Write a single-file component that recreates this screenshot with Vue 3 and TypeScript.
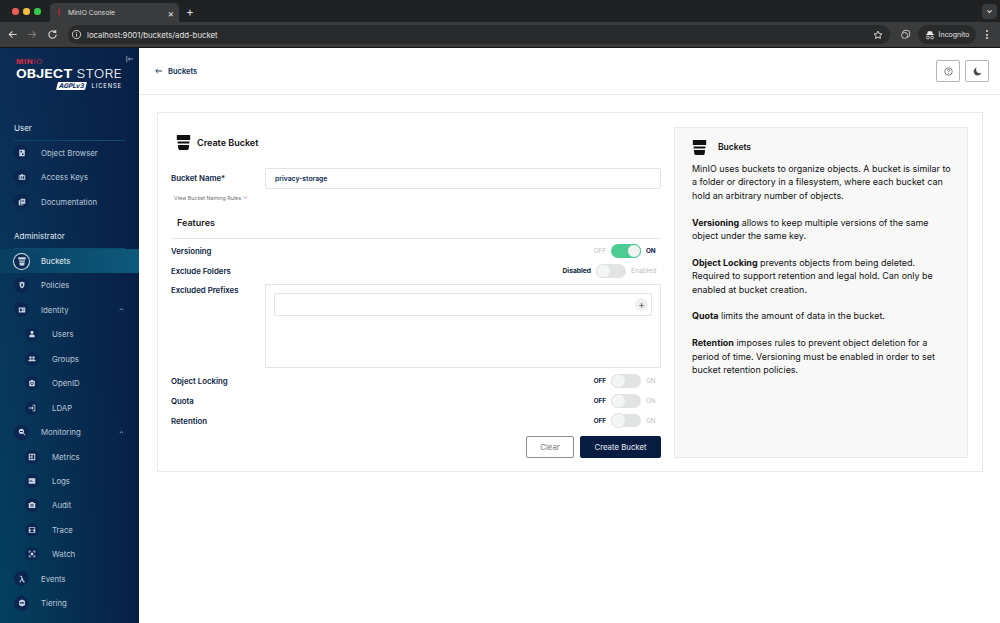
<script setup lang="ts">
type NavItem = { label: string; icon: string; sub?: boolean; active?: boolean; chevron?: boolean };
type NavGroup = { title: string; items: NavItem[] };

const icons: Record<string, string> = {
  browser: 'M2.500 1.500h11v13h-11z M5 4v3h3V4z M8 9v3h3V9z',
  keys: 'M1.500 4.500h3.500l1-2h4l1 2h3.500v9h-13z M6.500 6.500v5h1.500v-5z M9.500 6.500v5h3v-5z M3 6.500v5h1.500v-5z',
  docs: 'M5 1.500h9.500v10H5z M1.500 4.500H4v8.500h7v1.500H1.500z M7 4v1.200h5.500V4z M7 6.800V8h5.500V6.800z',
  bucket: 'M2 2h12v3.500H2z M3 7h10l-.4 2H3.400z M3.800 10.500h8.400L11.500 15h-7z',
  policies: 'M8 1c2 1.300 3.500 1.600 4.800 1.600v5.400c0 3.200-2 5.300-4.800 7C5.200 13.300 3.200 11.200 3.200 8V2.600C4.500 2.600 6 2.300 8 1z M8 4.500a1.500 3 0 1 0 0 7 1.500 3 0 0 0 0-7z',
  identity: 'M1.500 3h13v10h-13z M3.500 5.500v5h4v-5z M9 5.500v1.200h4V5.500z M9 8v1.200h4V8z',
  user: 'M8 1.500a3.200 3.200 0 1 1 0 6.400 3.200 3.200 0 0 1 0-6.400z M2.500 14.500v-2.500c0-2 2.300-3 5.500-3s5.500 1 5.500 3v2.500z',
  group: 'M5 2.500a2.400 2.400 0 1 1 0 4.800A2.400 2.400 0 0 1 5 2.500z M11 2.500a2.400 2.400 0 1 1 0 4.800A2.400 2.400 0 0 1 11 2.500z M.500 12.500c0-2.700 2.200-4.200 4.500-4.200 1 0 2.100.3 3 1 .9-.7 2-1 3-1 2.300 0 4.500 1.500 4.500 4.200z',
  openid: 'M8 1.500a2.200 2.200 0 0 1 2.200 2.200H13.500v10.800h-11V3.700h3.300A2.200 2.200 0 0 1 8 1.500z M8 5.500a3.200 3.200 0 1 0 0 6.400 3.200 3.200 0 0 0 0-6.400z M8 7a1.700 1.700 0 1 1 0 3.400A1.700 1.700 0 0 1 8 7z',
  ldap: 'M9 1.500h5.500v13H9v-1.500h4v-10H9z M1.500 7H8V4.500L11.500 8 8 11.500V9H1.500z',
  monitoring: 'M6.800 1.500a5.300 5.300 0 0 1 4.300 8.400l3.800 3.800-1.300 1.300-3.800-3.800A5.300 5.300 0 1 1 6.800 1.500z M4 5.800v2h5.600v-2z',
  metrics: 'M1.500 1.500h13v13h-13z M3.500 3.500v3.500h3.500V3.500z M9 3.500v9h3.500v-9z M3.500 9v3.500h3.500V9z',
  logs: 'M1.500 2.500h13v11h-13z M3 6v1.200h5V6z M3 8.800V10h7V8.800z',
  audit: 'M1.500 4h3l1-2h5l1 2h3v10h-13z M8 5.500a3 3 0 1 0 0 6 3 3 0 0 0 0-6z M8 7a1.500 1.500 0 1 1 0 3 1.500 1.500 0 0 1 0-3z',
  trace: 'M1.500 2.500h13V14h-13z M3 4v1.500l4 3-4 3V12.500h10v-1l-4-3 4-3V4z',
  watch: 'M1.500 1.500h4.500V3H3v3H1.500z M10 1.500h4.500V6H13V3h-3z M1.500 10H3v3h3v1.500H1.500z M13 10h1.500v4.500H10V13h3z M8 5a3 3 0 1 1 0 6 3 3 0 0 1 0-6z',
  events: 'M3.500 1.500h2.200c1.100 0 1.800.6 2.200 1.700L12 13h2v1.500h-3c-.7 0-1.100-.3-1.400-1L8 9l-3 5.500H2.500L7 7 6.300 4.500C6.100 3.700 5.800 3 5 3H3.500z',
  tiering: 'M8 1l6 3.200v7.600L8 15l-6-3.200V4.200z M3.500 6.200v1.100h9V6.200z M3.500 9v1.100h9V9z',
};

const groups: NavGroup[] = [
  {
    title: 'User',
    items: [
      { label: 'Object Browser', icon: 'browser' },
      { label: 'Access Keys', icon: 'keys' },
      { label: 'Documentation', icon: 'docs' },
    ],
  },
  {
    title: 'Administrator',
    items: [
      { label: 'Buckets', icon: 'bucket', active: true },
      { label: 'Policies', icon: 'policies' },
      { label: 'Identity', icon: 'identity', chevron: true },
      { label: 'Users', icon: 'user', sub: true },
      { label: 'Groups', icon: 'group', sub: true },
      { label: 'OpenID', icon: 'openid', sub: true },
      { label: 'LDAP', icon: 'ldap', sub: true },
      { label: 'Monitoring', icon: 'monitoring', chevron: true },
      { label: 'Metrics', icon: 'metrics', sub: true },
      { label: 'Logs', icon: 'logs', sub: true },
      { label: 'Audit', icon: 'audit', sub: true },
      { label: 'Trace', icon: 'trace', sub: true },
      { label: 'Watch', icon: 'watch', sub: true },
      { label: 'Events', icon: 'events' },
      { label: 'Tiering', icon: 'tiering' },
    ],
  },
];

const offToggles = ['Object Locking', 'Quota', 'Retention'];
const bucketPath = 'M0 0h16v6H0z M.8 7.700h14.400l-.3 2.600H1.100z M1.300 12h13.400l-.5 4.600c-.1.900-.6 1.400-1.500 1.400H3.300c-.9 0-1.400-.5-1.500-1.400z';
</script>

<template>
  <div class="page">
    <header class="chrome">
      <div class="tabstrip">
        <span class="light red"></span>
        <span class="light yellow"></span>
        <span class="light green"></span>
        <div class="tab">
          <svg class="favicon" viewBox="0 0 8 14" width="6" height="11">
            <path d="M4 0l2 3-1.500 2.500L6 8 3 14l1-5-2-2 1.500-3z" fill="#b1283a" />
          </svg>
          <span class="tab-title">MinIO Console</span>
          <span class="tab-x">×</span>
        </div>
        <span class="tab-plus">+</span>
        <span class="strip-menu">
          <svg viewBox="0 0 10 10" width="7" height="7"><path d="M2 3.500l3 3 3-3" fill="none" stroke="#e6e6e6" stroke-width="1.500" /></svg>
        </span>
      </div>
      <div class="toolbar">
        <svg class="tool" viewBox="0 0 12 12"><path d="M10.500 6h-8M6 2.500L2.500 6 6 9.500" fill="none" stroke="#d6d6d6" stroke-width="1.200" /></svg>
        <svg class="tool" viewBox="0 0 12 12"><path d="M1.500 6h8M6 2.500L9.500 6 6 9.500" fill="none" stroke="#7a7a7a" stroke-width="1.200" /></svg>
        <svg class="tool" viewBox="0 0 12 12"><path d="M10 6a4 4 0 1 1-1.200-2.800M9.500 1v2.700H6.800" fill="none" stroke="#d6d6d6" stroke-width="1.200" /></svg>
        <div class="omnibox">
          <svg class="info" viewBox="0 0 12 12"><circle cx="6" cy="6" r="4.500" fill="none" stroke="#e0e0e0" /><path d="M6 5.300v3M6 3.500v1" stroke="#e0e0e0" /></svg>
          <span class="url">localhost:9001/buckets/add-bucket</span>
          <svg class="star" viewBox="0 0 12 12"><path d="M6 1.300l1.400 3 3.300.4-2.400 2.200.6 3.300L6 8.600l-2.900 1.600.6-3.300L1.300 4.700l3.300-.4z" fill="none" stroke="#e6e6e6" stroke-width="1.100" /></svg>
        </div>
        <svg class="ext" viewBox="0 0 12 12"><rect x="3" y="1.500" width="7.500" height="7.500" rx="2.500" fill="none" stroke="#cfcfcf" /><circle cx="5" cy="7" r="3.300" fill="#3a3b3c" stroke="#cfcfcf" /></svg>
        <div class="incognito">
          <svg viewBox="0 0 12 12" width="10" height="10"><path d="M3.500 1.500h5L9.500 5H11v1H1V5h1.500z" fill="#e6e6e6" /><circle cx="3.500" cy="9" r="1.700" fill="none" stroke="#e6e6e6" /><circle cx="8.500" cy="9" r="1.700" fill="none" stroke="#e6e6e6" /></svg>
          <span>Incognito</span>
        </div>
        <span class="kebab"><i></i><i></i><i></i></span>
      </div>
    </header>

    <div class="body">
      <aside class="sidebar">
        <div class="brand">
          <div class="brand-min"><b>MIN</b>IO</div>
          <div class="brand-main"><b>OBJECT</b> <span>STORE</span></div>
          <div class="brand-lic"><em><span>AGPLv3</span></em><small>LICENSE</small></div>
          <svg class="collapse" viewBox="0 0 10 10" width="8" height="8"><path d="M1 1v8M9 5H3M5 3L3 5l2 2" fill="none" stroke="#b8c7d8" stroke-width=".9" /></svg>
        </div>
        <section v-for="g in groups" :key="g.title" class="group">
          <div class="group-title">{{ g.title }}</div>
          <div v-for="it in g.items" :key="it.label" class="nav" :class="{ sub: it.sub, active: it.active }">
            <span class="nav-icon">
              <svg viewBox="0 0 16 16" width="8" height="8"><path :d="icons[it.icon]" fill="currentColor" fill-rule="evenodd" /></svg>
            </span>
            <span class="nav-label">{{ it.label }}</span>
            <span v-if="it.chevron" class="chev">
              <svg viewBox="0 0 8 8" width="5" height="5"><path d="M1.500 5L4 2.500 6.500 5" fill="none" stroke="#c6d3e0" stroke-width="1" /></svg>
            </span>
          </div>
        </section>
      </aside>

      <main class="main">
        <div class="topbar">
          <div class="back">
            <svg viewBox="0 0 10 8" width="7" height="6"><path d="M10 4H1.500M4 1L1 4l3 3" fill="none" stroke="#081c42" stroke-width="1.200" /></svg>
            <span>Buckets</span>
          </div>
          <div class="top-actions">
            <button class="square">
              <svg viewBox="0 0 12 12" width="9" height="9"><circle cx="6" cy="6" r="5" fill="none" stroke="#555" /><path d="M4.500 4.600C4.600 3.700 5.200 3.200 6 3.200c.9 0 1.500.6 1.500 1.300 0 1.200-1.500 1.200-1.500 2.500M6 8v1.200" fill="none" stroke="#555" /></svg>
            </button>
            <button class="square">
              <svg viewBox="0 0 12 12" width="9" height="9"><path d="M5 .8a5.300 5.300 0 1 0 6.200 6.900A4.800 4.800 0 0 1 5 .8z" fill="#4a4a4a" /></svg>
            </button>
          </div>
        </div>

        <div class="content">
          <div class="card">
            <form class="form" @submit.prevent>
              <div class="title-row">
                <svg class="bucket-big" viewBox="0 0 16 18"><path :d="bucketPath" fill="#111" /></svg>
                <h2>Create Bucket</h2>
              </div>
              <div class="field">
                <label>Bucket Name*</label>
                <div class="input"><span>privacy-storage</span></div>
              </div>
              <div class="rules">
                View Bucket Naming Rules
                <svg viewBox="0 0 8 8" width="5" height="5"><path d="M1 2.500l3 3 3-3" fill="none" stroke="#666" stroke-width=".9" /></svg>
              </div>
              <h3>Features</h3>
              <div class="rule-line"></div>

              <div class="row">
                <label>Versioning</label>
                <div class="switch">
                  <span class="dim">OFF</span>
                  <span class="track on"><i></i></span>
                  <span class="strong w-on">ON</span>
                </div>
              </div>
              <div class="row">
                <label>Exclude Folders</label>
                <div class="switch wide">
                  <span class="strong">Disabled</span>
                  <span class="track"><i></i></span>
                  <span class="dim w-en">Enabled</span>
                </div>
              </div>
              <div class="prefix-row">
                <label>Excluded Prefixes</label>
                <div class="prefix-box">
                  <div class="prefix-input">
                    <span class="plus">+</span>
                  </div>
                </div>
              </div>
              <div v-for="t in offToggles" :key="t" class="row">
                <label>{{ t }}</label>
                <div class="switch">
                  <span class="strong">OFF</span>
                  <span class="track"><i></i></span>
                  <span class="dim w-on">ON</span>
                </div>
              </div>
              <div class="actions">
                <button class="btn ghost" type="button">Clear</button>
                <button class="btn primary" type="submit">Create Bucket</button>
              </div>
            </form>

            <aside class="help">
              <div class="help-title">
                <svg class="bucket-help" viewBox="0 0 16 18"><path :d="bucketPath" fill="#111" /></svg>
                <strong>Buckets</strong>
              </div>
              <p>MinIO uses buckets to organize objects. A bucket is similar to a folder or directory in a filesystem, where each bucket can hold an arbitrary number of objects.</p>
              <p><b>Versioning</b> allows to keep multiple versions of the same object under the same key.</p>
              <p><b>Object Locking</b> prevents objects from being deleted. Required to support retention and legal hold. Can only be enabled at bucket creation.</p>
              <p><b>Quota</b> limits the amount of data in the bucket.</p>
              <p><b>Retention</b> imposes rules to prevent object deletion for a period of time. Versioning must be enabled in order to set bucket retention policies.</p>
            </aside>
          </div>
        </div>
      </main>
    </div>
  </div>
</template>

<style>
html, body { margin: 0; background: #fff; }
</style>

<style scoped>
.page {
  width: 1000px;
  height: 623px;
  overflow: hidden;
  display: flex;
  flex-direction: column;
  font-family: Inter, "Liberation Sans", sans-serif;
  color: #081c42;
}
.chrome { flex: none; height: 48px; background: #1f2021; display: flex; flex-direction: column; }
.tabstrip { height: 22px; display: flex; align-items: center; padding: 1px 0 0 12px; box-sizing: border-box; background: #202122; }
.light { width: 6.500px; height: 6.500px; border-radius: 50%; margin-right: 4.500px; flex: none; }
.red { background: #ec5f57; }
.yellow { background: #f5bd3f; }
.green { background: #34c84a; }
.tab { margin-left: 5px; width: 129px; height: 19px; margin-top: 2px; align-self: flex-end; background: #3a3b3c; border-radius: 5px 5px 0 0; display: flex; align-items: center; padding: 0 5px 0 3px; box-sizing: border-box; color: #dcdcdc; font-size: 6.800px; }
.favicon { margin: 0 6px 0 3px; }
.tab-title { flex: 1; }
.tab-x { font-size: 10px; color: #e0e0e0; }
.tab-plus { margin-left: 7px; font-size: 12px; color: #e0e0e0; }
.strip-menu { margin-left: auto; margin-right: 3px; width: 15px; height: 15px; background: #3a3b3c; border-radius: 4px; display: flex; align-items: center; justify-content: center; }
.toolbar { height: 26px; background: #3a3b3c; border-bottom: 1px solid #131313; box-sizing: border-box; display: flex; align-items: center; padding: 0 6px 0 7px; }
.tool { width: 11px; height: 11px; margin-right: 9px; flex: none; }
.omnibox { margin-left: 1px; height: 19px; width: 822px; border-radius: 10px; background: #282a2b; display: flex; align-items: center; padding: 0 7px 0 3px; box-sizing: border-box; flex: none; }
.info { width: 11px; height: 11px; margin-right: 5px; }
.url { font-size: 7.800px; color: #e3e3e3; flex: 1; }
.star { width: 10px; height: 10px; }
.ext { width: 11px; height: 11px; margin-left: 10px; flex: none; }
.incognito { margin-left: 7px; height: 19px; width: 58px; border-radius: 10px; background: #282a2b; color: #e3e3e3; display: flex; align-items: center; justify-content: center; gap: 4px; font-size: 7px; flex: none; }
.kebab { margin-left: 10px; display: flex; flex-direction: column; gap: 1.500px; }
.kebab i { display: block; width: 2px; height: 2px; border-radius: 50%; background: #e3e3e3; }

.body { flex: 1; min-height: 0; display: flex; }
.sidebar { flex: none; width: 139px; background: linear-gradient(90deg, rgba(8, 31, 69, 0) 0%, #081f45 100%), linear-gradient(180deg, #0c2d56 0%, #03415f 100%); color: #b9c7d7; overflow: hidden; position: relative; }
.brand { height: 69.500px; padding: 11px 0 0 16px; box-sizing: border-box; color: #fff; position: relative; }
.brand-min { font-size: 5.500px; font-weight: 400; letter-spacing: .5px; color: #c72c48; transform: scaleX(1.4); transform-origin: left; line-height: 6px; }
.brand-min b { font-weight: 800; }
.brand-main { font-size: 11.500px; line-height: 14px; white-space: nowrap; margin-top: 2px; transform: scaleX(1.22); transform-origin: left; }
.brand-main b { font-weight: 700; }
.brand-main span { font-weight: 300; }
.brand-lic { display: flex; justify-content: flex-end; align-items: center; gap: 5px; width: 106px; line-height: 9px; }
.brand-lic small { font-size: 5.800px; letter-spacing: .9px; }
.brand-lic em { display: block; font-style: normal; background: #fff; padding: 0 2px; border-radius: 1px; transform: skewX(-14deg); }
.brand-lic em span { display: block; font-size: 6.500px; font-weight: 800; color: #1b3c6e; letter-spacing: 0; line-height: 8px; }
.collapse { position: absolute; top: 7px; left: 126px; }
.group-title { margin: 0 0 0 14px; width: 111px; height: 23px; line-height: 21px; color: #dfe6ee; font-size: 8px; border-bottom: 1px solid #0c4a6e; box-sizing: border-box; }
.group { padding-bottom: 12px; }
.nav { height: 24.450px; display: flex; align-items: center; padding-left: 14px; font-size: 7.800px; position: relative; }
.nav.sub { padding-left: 25px; }
.nav-icon { width: 15px; height: 15px; border-radius: 50%; background: #0a2650; display: flex; align-items: center; justify-content: center; color: #c9d5e2; margin-right: 12px; flex: none; }
.nav.sub .nav-icon { width: 14px; height: 14px; margin-right: 13px; }
.nav.active { background: linear-gradient(90deg, #083e60 0%, #0e5a7c 100%); color: #e8eef4; }
.nav.active .nav-icon { background: #0a2c50; box-shadow: 0 0 0 1px #d7e1ec; }
.nav.active .nav-icon svg { width: 10px; height: 10px; }
.chev { position: absolute; left: 117px; width: 8px; height: 8px; border-radius: 50%; background: #082650; display: flex; align-items: center; justify-content: center; }

.main { flex: 1; min-width: 0; display: flex; flex-direction: column; background: #fff; }
.topbar { flex: none; height: 47px; box-sizing: border-box; border-bottom: 1px solid #eaeaea; display: flex; align-items: center; justify-content: space-between; padding: 0 11px 0 16px; }
.back { display: flex; align-items: center; gap: 6px; font-size: 7.500px; font-weight: 600; color: #0b2b52; }
.top-actions { display: flex; gap: 5px; }
.square { width: 24px; height: 22px; padding: 0; background: #fff; border: 1px solid #b5b5b5; border-radius: 2px; display: flex; align-items: center; justify-content: center; }

.content { padding: 17px 17px 0 18px; }
.card { height: 360px; box-sizing: border-box; border: 1px solid #eaeaea; padding: 14px 14px 13px 13px; display: flex; gap: 13px; }
.form { width: 490px; flex: none; display: flex; flex-direction: column; }
.title-row { height: 27px; box-sizing: border-box; padding: 4px 0 0 5px; display: flex; align-items: center; gap: 6px; }
.bucket-big { width: 15px; height: 15px; }
.title-row h2 { margin: 0; font-size: 9px; font-weight: 600; color: #111; }
.field { display: flex; align-items: center; margin-top: 14px; }
.field label, .row label, .prefix-row label { font-size: 7.800px; font-weight: 600; color: #081c42; }
.field label { width: 94px; flex: none; }
.input { flex: 1; height: 21px; border: 1px solid #e4e4e4; border-radius: 2px; display: flex; align-items: center; padding-left: 9px; font-size: 6.800px; font-weight: 600; color: #0b2b52; box-sizing: border-box; }
.rules { margin: 4px 0 0 3px; font-size: 5.300px; color: #6f6f6f; display: flex; align-items: center; gap: 2px; height: 10px; }
h3 { margin: 14px 0 0 6px; font-size: 9px; font-weight: 600; color: #1b1b1b; line-height: 12px; }
.rule-line { height: 1px; background: #e4e4e4; margin-top: 9px; }
.row { height: 20px; display: flex; align-items: center; justify-content: space-between; }
.rule-line + .row { margin-top: 2.500px; }
.switch { display: flex; align-items: center; gap: 5px; font-size: 6.300px; }
.switch.wide { font-size: 6.700px; padding-right: 5px; }
.dim { color: #bdbdbd; }
.strong { font-weight: 700; color: #081c42; }
.w-on { width: 15px; }
.w-en { width: 25px; }
.track { width: 30px; height: 13.500px; border-radius: 7px; background: #e2e4e4; position: relative; display: block; }
.track i { position: absolute; left: 0; top: -.500px; width: 14.500px; height: 14.500px; box-sizing: border-box; border-radius: 50%; background: #f4f5f5; border: 1px solid #e0e2e2; }
.track.on { background: #4ccb92; }
.track.on i { left: auto; right: 0; background: #f1f3f2; border-color: #4ccb92; }
.prefix-row { display: flex; align-items: flex-start; margin-top: 3px; }
.prefix-row label { width: 94px; flex: none; padding-top: 1px; }
.prefix-box { flex: 1; height: 84px; box-sizing: border-box; border: 1px solid #e4e4e4; padding: 8px 8px 0; }
.prefix-input { height: 23px; box-sizing: border-box; border: 1px solid #e4e4e4; border-radius: 2px; display: flex; align-items: center; justify-content: flex-end; padding-right: 3px; }
.plus { width: 13px; height: 13px; border-radius: 50%; background: #f1f1f1; color: #666; font-size: 10px; line-height: 13px; text-align: center; }
.prefix-row + .row { margin-top: 3.500px; }
.actions { display: flex; justify-content: flex-end; gap: 6px; margin-top: 5.500px; }
.btn { height: 22px; font-family: inherit; font-size: 7.800px; border-radius: 2px; padding: 0; }
.ghost { width: 48px; background: #fff; border: 1px solid #8d8d8d; color: #7a7a7a; }
.primary { width: 81px; background: #081c42; border: 1px solid #081c42; color: #e8edf4; }

.help { flex: 1; box-sizing: border-box; background: #f8f8f8; border: 1px solid #eaeaea; padding: 9px 16px 0 17px; font-size: 8.950px; line-height: 13.400px; color: #111; }
.help-title { display: flex; align-items: center; gap: 11px; height: 21px; margin-bottom: 4px; }
.bucket-help { width: 15px; height: 15px; }
.help-title strong { font-size: 8.500px; font-weight: 600; }
.help p { margin: 0 0 13.400px; }
.help b { font-weight: 700; }
</style>
